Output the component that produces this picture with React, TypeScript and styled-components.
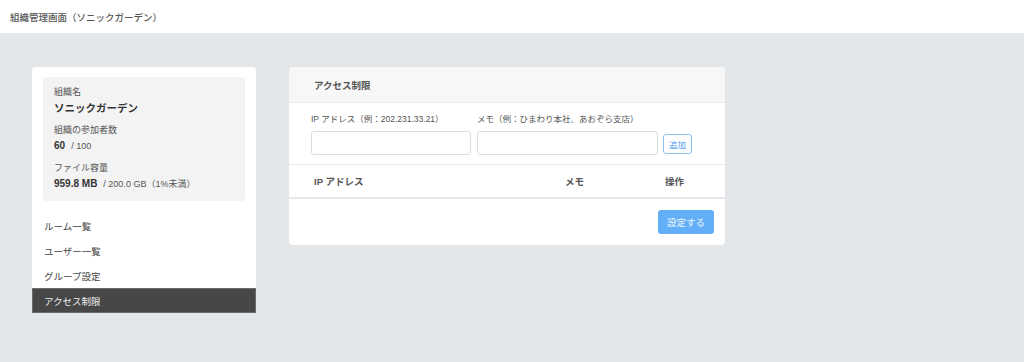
import React from 'react';
import styled, { createGlobalStyle } from 'styled-components';

const GlobalStyle = createGlobalStyle`
  body {
    margin: 0;
    background: #e4e7ea;
    font-family: "Liberation Sans", "Noto Sans CJK JP", sans-serif;
    color: #333;
  }
  #root {
    min-height: 100vh;
  }
`;

const navItems = ['ルーム一覧', 'ユーザー一覧', 'グループ設定', 'アクセス制限'];

const App = () => (
    <Page>
        <GlobalStyle />
        <TopBar>組織管理画面（ソニックガーデン）</TopBar>
        <Content>
            <Sidebar>
                <InfoBox>
                    <InfoLabel>組織名</InfoLabel>
                    <OrgName>ソニックガーデン</OrgName>
                    <InfoLabel>組織の参加者数</InfoLabel>
                    <InfoValue>
                        <strong>60</strong>
                        <span>/ 100</span>
                    </InfoValue>
                    <InfoLabel>ファイル容量</InfoLabel>
                    <InfoValue>
                        <strong>959.8 MB</strong>
                        <span>/ 200.0 GB（1%未満）</span>
                    </InfoValue>
                </InfoBox>
                <Nav>
                    {navItems.map((item, i) => (
                        <NavItem key={item} $active={i === navItems.length - 1}>
                            {item}
                        </NavItem>
                    ))}
                </Nav>
            </Sidebar>
            <Card>
                <CardHeader>アクセス制限</CardHeader>
                <FormRow>
                    <Field $width={160}>
                        <FieldLabel>IP アドレス（例：202.231.33.21）</FieldLabel>
                        <Input />
                    </Field>
                    <Field $width={181}>
                        <FieldLabel>メモ（例：ひまわり本社、あおぞら支店）</FieldLabel>
                        <Input />
                    </Field>
                    <AddButton>追加</AddButton>
                </FormRow>
                <TableHead>
                    <span>IP アドレス</span>
                    <span>メモ</span>
                    <span>操作</span>
                </TableHead>
                <CardFooter>
                    <SubmitButton>設定する</SubmitButton>
                </CardFooter>
            </Card>
        </Content>
    </Page>
);

const Page = styled.div`
    min-height: 100vh;
`;

const TopBar = styled.div`
    height: 33px;
    background: #fff;
    display: flex;
    align-items: center;
    padding-left: 10px;
    font-size: 9.5px;
    color: #555;
    font-weight: 500;
`;

const Content = styled.div`
    display: flex;
    align-items: flex-start;
    gap: 33px;
    padding: 34px 32px;
`;

const Sidebar = styled.div`
    width: 224px;
    background: #fff;
    border-radius: 3px 3px 0 0;
    padding-top: 10px;
`;

const InfoBox = styled.div`
    margin: 0 11px;
    background: #f3f3f3;
    border-radius: 3px;
    padding: 8px 11px 10px;
    height: 106px;
`;

const InfoLabel = styled.div`
    font-size: 9px;
    color: #555;
    line-height: 13px;
    margin-top: 8px;
    &:first-child {
        margin-top: 1px;
    }
`;

const OrgName = styled.div`
    font-size: 10.5px;
    font-weight: bold;
    color: #333;
    line-height: 16px;
    margin-top: 1px;
`;

const InfoValue = styled.div`
    font-size: 9px;
    line-height: 16px;
    margin-top: 1px;
    display: flex;
    gap: 6px;
    align-items: baseline;
    strong {
        font-size: 10px;
        color: #333;
    }
    span {
        color: #555;
    }
`;

const Nav = styled.div`
    margin-top: 12px;
`;

const NavItem = styled.div<{ $active?: boolean }>`
    height: 25px;
    display: flex;
    align-items: center;
    padding-left: 11px;
    font-size: 9.5px;
    box-sizing: border-box;
    color: ${(p) => (p.$active ? '#f0f0f0' : '#444')};
    background: ${(p) => (p.$active ? '#474747' : 'transparent')};
    border: 1px solid ${(p) => (p.$active ? '#6a6a6a' : 'transparent')};
`;

const Card = styled.div`
    width: 436px;
    background: #fff;
    border-radius: 4px;
    overflow: hidden;
`;

const CardHeader = styled.div`
    height: 36px;
    box-sizing: border-box;
    background: #f7f7f7;
    border-bottom: 1px solid #ececec;
    display: flex;
    align-items: center;
    padding-left: 25px;
    font-size: 9.5px;
    font-weight: bold;
    color: #555;
`;

const FormRow = styled.div`
    display: flex;
    align-items: flex-end;
    gap: 6px;
    padding: 10px 22px 9px;
    border-bottom: 1px solid #e6e8eb;
`;

const Field = styled.div<{ $width: number }>`
    width: ${(p) => p.$width}px;
    display: flex;
    flex-direction: column;
    gap: 5px;
`;

const FieldLabel = styled.div`
    font-size: 8.5px;
    color: #555;
    line-height: 13px;
    white-space: nowrap;
`;

const Input = styled.input`
    height: 24px;
    box-sizing: border-box;
    border: 1px solid #dcdcdc;
    border-radius: 3px;
    width: 100%;
    padding: 0 6px;
`;

const AddButton = styled.button`
    height: 20px;
    width: 29px;
    margin-left: -1px;
    margin-bottom: 1px;
    padding: 0;
    box-sizing: border-box;
    background: #fff;
    border: 1px solid #8fc2f7;
    border-radius: 3px;
    color: #4a9cf0;
    font-size: 8.5px;
    font-family: inherit;
`;

const TableHead = styled.div`
    display: grid;
    grid-template-columns: 251px 100px auto;
    height: 32px;
    align-items: center;
    padding-left: 25px;
    border-bottom: 2px solid #e6e8eb;
    font-size: 9.5px;
    font-weight: bold;
    color: #555;
`;

const CardFooter = styled.div`
    display: flex;
    justify-content: flex-end;
    padding: 11px;
`;

const SubmitButton = styled.button`
    width: 56px;
    height: 24px;
    border: none;
    border-radius: 3px;
    background: #63aff7;
    color: #eef6ff;
    font-size: 9.5px;
    font-family: inherit;
    padding: 0;
`;

export default App;
